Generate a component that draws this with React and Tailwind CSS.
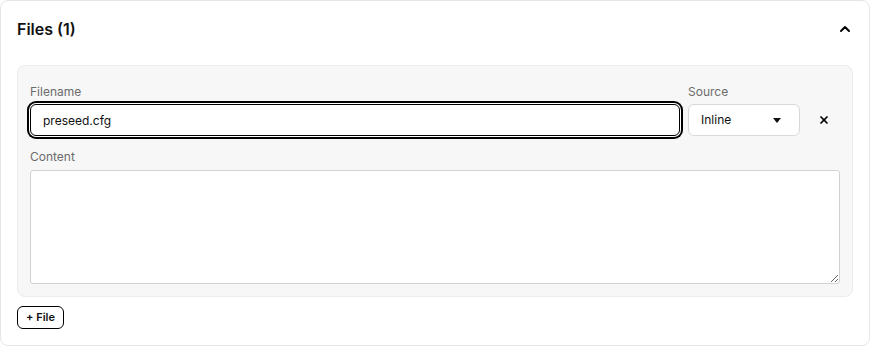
import { ChevronUp, X } from "lucide-react";

export default function App() {
  return (
    <div className="w-full bg-white" style={{ fontFamily: "Inter, 'Noto Sans', sans-serif" }}>
      <div className="border border-[#e6e6e6] rounded-lg px-4 pt-4 pb-4 text-[#111]">
        {/* Header */}
        <div className="flex items-center justify-between h-6 mb-6">
          <h2 className="text-base font-semibold">Files (1)</h2>
          <button className="text-black">
            <ChevronUp size={16} strokeWidth={3} />
          </button>
        </div>

        {/* File entry */}
        <div className="bg-[#f7f7f7] border border-[#ececec] rounded-lg px-3 pt-4 pb-3">
          <div className="flex gap-2 items-end">
            <div className="flex-1">
              <label className="block text-xs leading-5 text-[#6b6b6b] mb-0.5">
                Filename
              </label>
              <input
                defaultValue="preseed.cfg"
                className="w-full h-8 px-3 text-xs bg-white border border-black rounded-md outline-none shadow-[0_0_0_1px_#fff,0_0_0_3px_#000]"
              />
            </div>
            <div className="w-[112px]">
              <label className="block text-xs leading-5 text-[#6b6b6b] mb-0.5">
                Source
              </label>
              <div className="h-8 px-3 flex items-center justify-between bg-white border border-[#d9d9d9] rounded-md text-xs">
                <span>Inline</span>
                <svg width="8" height="5" viewBox="0 0 8 5" className="mr-1.5">
                  <path d="M0 0h8L4 5z" fill="#111" />
                </svg>
              </div>
            </div>
            <button className="w-8 h-8 flex items-center justify-center text-black">
              <X size={12} strokeWidth={3.4} />
            </button>
          </div>

          <div className="mt-[11px]">
            <label className="block text-xs leading-5 text-[#6b6b6b] mb-[3px]">
              Content
            </label>
            <textarea className="block w-full h-[114px] bg-white border border-[#d2d2d2] rounded-[3px] outline-none text-xs p-2" />
          </div>
        </div>

        <button className="mt-[9px] h-[23px] px-2 border border-black rounded-md text-[11px] font-semibold leading-none">
          + File
        </button>
      </div>
    </div>
  );
}
